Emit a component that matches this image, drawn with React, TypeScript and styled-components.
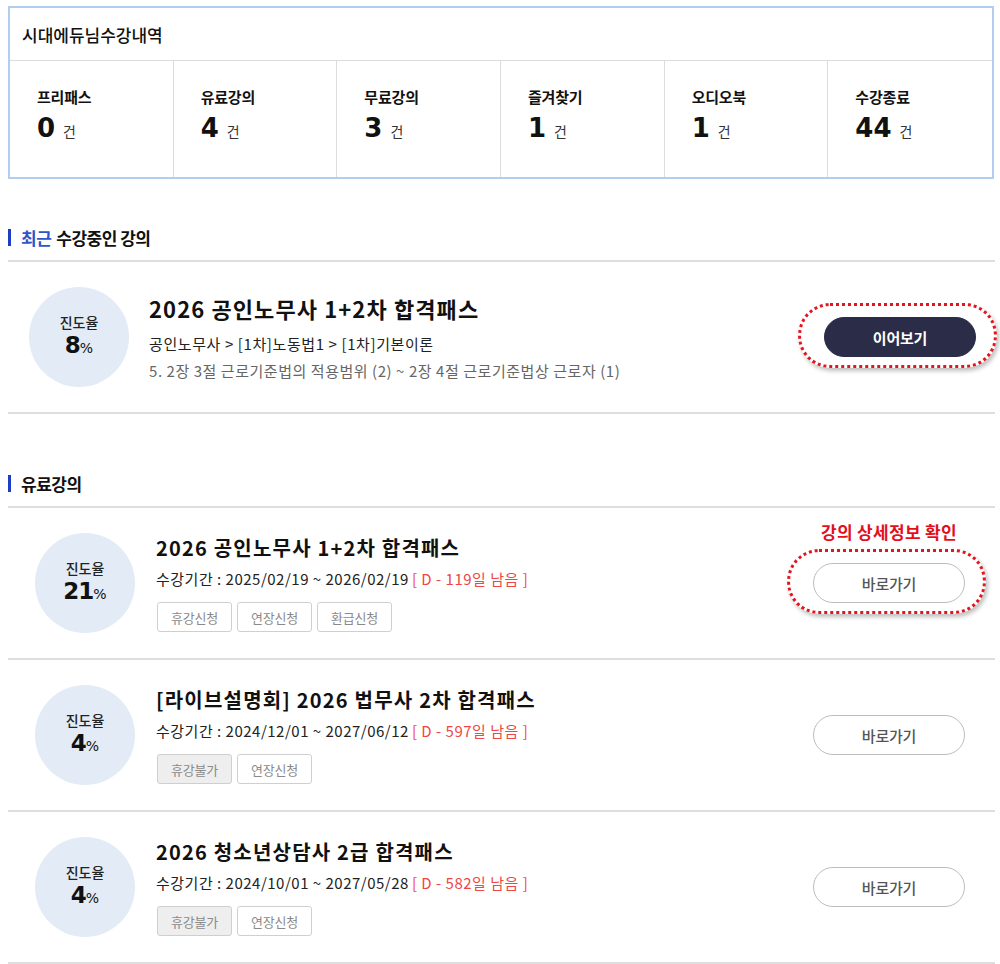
import React from 'react';
import styled, { createGlobalStyle } from 'styled-components';

const KR = `"Noto Sans CJK KR", "Noto Sans", sans-serif`;
const NUM = `"DejaVu Sans", "Noto Sans CJK KR", sans-serif`;

const GlobalStyle = createGlobalStyle`
  html, body { margin: 0; padding: 0; background: #fff; }
  body { font-family: ${KR}; color: #111; }
  * { box-sizing: border-box; }
`;

const Page = styled.div`
  width: 1000px;
  padding: 6px 6px 0 8px;
`;

const SummaryBox = styled.div`
  border: 2px solid #b3cdf1;
  width: 986px;
`;

const SummaryHead = styled.div`
  height: 53px;
  padding-left: 12px;
  display: flex;
  align-items: center;
  font-size: 17px;
  font-weight: 500;
  letter-spacing: 0;
  border-bottom: 1px solid #dcdcdc;
`;

const StatRow = styled.div`
  display: grid;
  grid-template-columns: repeat(6, 1fr);
  height: 116px;
`;

const StatCell = styled.div`
  padding: 26px 0 0 27px;
  border-right: 1px solid #dcdcdc;
  &:last-child { border-right: none; }
`;

const StatLabel = styled.div`
  font-size: 15px;
  font-weight: 700;
  letter-spacing: -0.2px;
  line-height: 20px;
`;

const StatValue = styled.div`
  margin-top: 5px;
  display: flex;
  align-items: baseline;
  gap: 8px;
  b {
    font-family: ${NUM};
    font-size: 26px;
    font-weight: 700;
    line-height: 32px;
  }
  span {
    font-size: 14px;
    color: #333;
  }
`;

const SectionTitle = styled.h3<{ $top: number }>`
  margin: ${p => p.$top}px 0 0;
  display: flex;
  align-items: center;
  height: 22px;
  font-size: 17px;
  font-weight: 700;
  letter-spacing: -0.5px;
  &::before {
    content: '';
    width: 3px;
    height: 17px;
    background: #1b3fc4;
    margin-right: 10px;
  }
  em {
    font-style: normal;
    color: #2d57c7;
    margin-right: 5px;
  }
`;

const List = styled.div`
  margin-top: 12px;
  border-top: 2px solid #dedede;
  width: 987px;
`;

const Row = styled.div<{ $pad: number; $right: number }>`
  position: relative;
  display: flex;
  align-items: center;
  height: 152px;
  padding-left: ${p => p.$pad}px;
  padding-right: ${p => p.$right}px;
  border-bottom: 2px solid #dedede;
`;

const Progress = styled.div`
  width: 100px;
  height: 100px;
  border-radius: 50%;
  background: #e3ebf6;
  display: flex;
  flex-direction: column;
  align-items: center;
  justify-content: center;
  flex-shrink: 0;
  small {
    font-size: 14px;
    font-weight: 500;
    line-height: 18px;
    color: #222;
  }
  b {
    font-family: ${NUM};
    font-size: 23px;
    font-weight: 700;
    line-height: 28px;
    letter-spacing: -1px;
  }
  b span {
    font-size: 14px;
    font-weight: 400;
    letter-spacing: 0;
  }
`;

const Info = styled.div<{ $gap: number }>`
  flex: 1;
  margin-left: ${p => p.$gap}px;
`;

const Title = styled.div<{ $size: number; $track: number }>`
  font-size: ${p => p.$size}px;
  font-weight: 700;
  letter-spacing: ${p => p.$track}px;
  line-height: 28px;
  color: #111;
`;

const Crumb = styled.div`
  margin-top: 12px;
  font-size: 15px;
  letter-spacing: 0.6px;
  line-height: 20px;
  color: #222;
`;

const SubText = styled.div`
  margin-top: 7px;
  font-size: 15px;
  letter-spacing: 0.55px;
  line-height: 20px;
  color: #666;
`;

const Period = styled.div`
  margin-top: 7px;
  font-size: 15px;
  letter-spacing: 0.5px;
  line-height: 20px;
  color: #222;
  em {
    font-style: normal;
    color: #f04545;
    margin-left: 3px;
  }
`;

const Tags = styled.div`
  margin-top: 13px;
  margin-left: 1px;
  display: flex;
  gap: 5px;
`;

const Tag = styled.span<{ $off?: boolean }>`
  height: 30px;
  width: 75px;
  display: inline-flex;
  align-items: center;
  justify-content: center;
  border: 1px solid #cfcfcf;
  border-radius: 3px;
  font-size: 13px;
  letter-spacing: -0.2px;
  color: #8a8a8a;
  background: ${p => (p.$off ? '#eeeeee' : '#fff')};
`;

const Action = styled.div`
  position: relative;
  flex-shrink: 0;
`;

const Mark = styled.div`
  position: absolute;
  left: -26px;
  right: -21px;
  top: -14px;
  bottom: -11px;
  border: 3px dotted #e4141c;
  border-radius: 32px;
  box-shadow: 2px 3px 4px rgba(0, 0, 0, 0.25);
  pointer-events: none;
`;

const Note = styled.div`
  position: absolute;
  top: -44px;
  left: -20px;
  right: -20px;
  text-align: center;
  white-space: nowrap;
  font-size: 17px;
  font-weight: 700;
  letter-spacing: 0.3px;
  color: #e3101c;
`;

const Button = styled.button<{ $dark?: boolean }>`
  width: 152px;
  height: 40px;
  border-radius: 20px;
  font-family: ${KR};
  font-size: 15px;
  font-weight: ${p => (p.$dark ? 700 : 500)};
  letter-spacing: -0.2px;
  cursor: pointer;
  background: ${p => (p.$dark ? '#2b2c48' : '#fff')};
  color: ${p => (p.$dark ? '#fff' : '#555')};
  border: 1px solid ${p => (p.$dark ? '#2b2c48' : '#bdbdbd')};
`;

const stats = [
  { label: '프리패스', count: 0 },
  { label: '유료강의', count: 4 },
  { label: '무료강의', count: 3 },
  { label: '즐겨찾기', count: 1 },
  { label: '오디오북', count: 1 },
  { label: '수강종료', count: 44 },
];

const paid = [
  {
    rate: 21,
    title: '2026 공인노무사 1+2차 합격패스',
    period: '2025/02/19 ~ 2026/02/19',
    dday: 119,
    tags: [{ t: '휴강신청' }, { t: '연장신청' }, { t: '환급신청' }],
    marked: true,
  },
  {
    rate: 4,
    title: '[라이브설명회] 2026 법무사 2차 합격패스',
    period: '2024/12/01 ~ 2027/06/12',
    dday: 597,
    tags: [{ t: '휴강불가', off: true }, { t: '연장신청' }],
  },
  {
    rate: 4,
    title: '2026 청소년상담사 2급 합격패스',
    period: '2024/10/01 ~ 2027/05/28',
    dday: 582,
    tags: [{ t: '휴강불가', off: true }, { t: '연장신청' }],
  },
];

const ProgressCircle = ({ rate }: { rate: number }) => (
  <Progress>
    <small>진도율</small>
    <b>
      {rate}
      <span>%</span>
    </b>
  </Progress>
);

export default function App() {
  return (
    <Page>
      <GlobalStyle />
      <SummaryBox>
        <SummaryHead>시대에듀님수강내역</SummaryHead>
        <StatRow>
          {stats.map(s => (
            <StatCell key={s.label}>
              <StatLabel>{s.label}</StatLabel>
              <StatValue>
                <b>{s.count}</b>
                <span>건</span>
              </StatValue>
            </StatCell>
          ))}
        </StatRow>
      </SummaryBox>

      <SectionTitle $top={47}>
        <em>최근</em>수강중인 강의
      </SectionTitle>
      <List>
        <Row $pad={21} $right={19}>
          <ProgressCircle rate={8} />
          <Info $gap={20}>
            <Title $size={22} $track={1.1}>2026 공인노무사 1+2차 합격패스</Title>
            <Crumb>공인노무사 &gt; [1차]노동법1 &gt; [1차]기본이론</Crumb>
            <SubText>5. 2장 3절 근로기준법의 적용범위 (2) ~ 2장 4절 근로기준법상 근로자 (1)</SubText>
          </Info>
          <Action>
            <Mark />
            <Button $dark>이어보기</Button>
          </Action>
        </Row>
      </List>

      <SectionTitle $top={58}>유료강의</SectionTitle>
      <List>
        {paid.map((c, i) => (
          <Row $pad={27} $right={30} key={i}>
            <ProgressCircle rate={c.rate} />
            <Info $gap={21}>
              <Title $size={20} $track={1.2}>{c.title}</Title>
              <Period>
                수강기간 : {c.period}
                <em>[ D - {c.dday}일 남음 ]</em>
              </Period>
              <Tags>
                {c.tags.map(t => (
                  <Tag key={t.t} $off={'off' in t && t.off}>
                    {t.t}
                  </Tag>
                ))}
              </Tags>
            </Info>
            <Action>
              {c.marked && <Note>강의 상세정보 확인</Note>}
              {c.marked && <Mark />}
              <Button>바로가기</Button>
            </Action>
          </Row>
        ))}
      </List>
    </Page>
  );
}
